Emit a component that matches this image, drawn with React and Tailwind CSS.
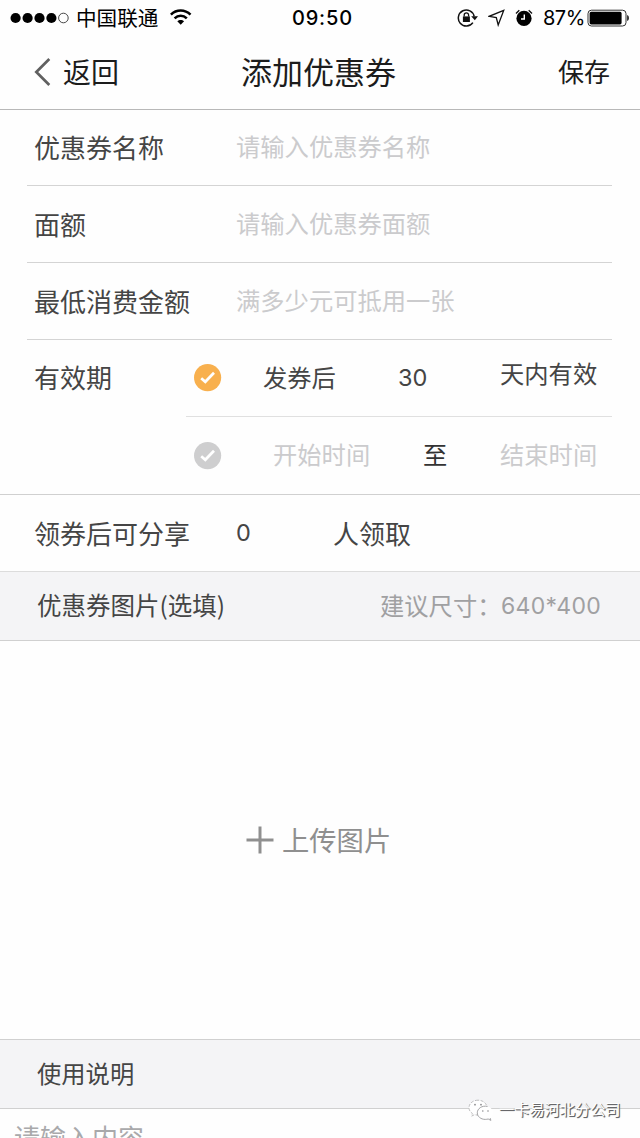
import React from "react";

const CJK = "font-['Noto_Sans_CJK_SC',sans-serif]";
const LATIN = "font-['Inter','Noto_Sans_CJK_SC',sans-serif]";

function StatusBar() {
  return (
    <div className="flex h-9 shrink-0 items-center text-black">
      <svg className="ml-[10px] h-[12px] w-[60px]" viewBox="0 0 60 12">
        <circle cx="5.6" cy="6" r="5.1" />
        <circle cx="17.6" cy="6" r="5.1" />
        <circle cx="29.5" cy="6" r="5.1" />
        <circle cx="41.4" cy="6" r="5.1" />
        <circle cx="53.4" cy="6" r="4.8" fill="none" stroke="#333" strokeWidth="0.9" />
      </svg>
      <span className="-mt-[2px] ml-[6px] w-[94px] text-[20.6px] leading-none">中国联通</span>
      <svg className="-mt-[2px] h-[18px] w-[22px]" viewBox="0 0 22 18" fill="none" stroke="#000" strokeWidth="2.6">
        <path d="M0.9 6.6C6.5 1.1 14.9 1.1 20.5 6.6" />
        <path d="M4.6 10.4C8.2 6.9 13.2 6.9 16.8 10.4" />
        <path d="M10.7 16.8L7.3 13.3C9.2 11.4 12.2 11.4 14.1 13.3Z" fill="#000" stroke="none" />
      </svg>
      <span className={`ml-[100px] w-[165px] text-[20px] font-medium leading-none tracking-[0.8px] ${LATIN}`}>09:50</span>
      <svg className="h-[20px] w-[22px]" viewBox="0 0 22 20" fill="none" stroke="#111" strokeWidth="1.5">
        <path d="M15.9 14.6A8 8 0 1 1 17.2 8.5" />
        <path d="M14.2 8.2H21L17.8 12.2Z" fill="#111" stroke="none" />
        <rect x="5.9" y="8.4" width="7" height="5.6" fill="#111" stroke="none" />
        <path d="M7.2 8.5V7a2.2 2.2 0 0 1 4.4 0v1.5" strokeWidth="1.3" />
      </svg>
      <svg className="ml-[9px] h-[18px] w-[18px]" viewBox="0 0 18 18" fill="none" stroke="#111" strokeWidth="1.3">
        <path d="M15.7 1.4L1.2 7.3L8.3 8.5L10.2 16Z" strokeLinejoin="miter" />
      </svg>
      <svg className="ml-[9px] h-[18px] w-[18px]" viewBox="0 0 18 18">
        <circle cx="9" cy="9.4" r="7.6" />
        <path d="M9.3 5.4V10H6" fill="none" stroke="#fff" strokeWidth="1.4" />
        <path d="M1 4.5L4.3 1.3M17 4.5L13.7 1.3" fill="none" stroke="#111" strokeWidth="1.4" />
      </svg>
      <span className={`ml-[10px] w-[44px] text-[20px] leading-none tracking-[-0.5px] ${LATIN}`}>87%</span>
      <svg className="h-[18px] w-[43px]" viewBox="0 0 43 18">
        <rect x="1" y="1.2" width="38" height="15.8" rx="3.4" fill="none" stroke="#333" strokeWidth="1" />
        <rect x="2.6" y="2.8" width="32" height="12.6" rx="1.6" />
        <path d="M40.2 6C42.4 6.6 42.4 11.4 40.2 12Z" fill="#111" />
      </svg>
    </div>
  );
}

function NavBar() {
  return (
    <div className="flex h-[74px] shrink-0 items-center border-b border-[#b8b8b8] text-[#1c1c1c]">
      <svg className="-mt-[2px] ml-[34px] h-[28px] w-[18px]" viewBox="0 0 18 28" fill="none" stroke="#606060" strokeWidth="2.7">
        <path d="M15.3 1L2.3 14L15.3 27" />
      </svg>
      <span className="mb-[4px] ml-[11px] w-[178px] text-[28px] leading-none">返回</span>
      <span className="mb-[5px] w-[317px] text-[31px] leading-none">添加优惠券</span>
      <span className="mb-[3px] text-[26px] leading-none">保存</span>
    </div>
  );
}

function Field({ label, placeholder, height }) {
  return (
    <div className={`ml-[27px] mr-[28px] flex shrink-0 items-center border-b border-[#d4d4d4] pl-[7px] ${height}`}>
      <span className="mb-px w-[202px] text-[26px] leading-none">{label}</span>
      <span className="mb-[2px] text-[24.3px] leading-none text-[#cbcbcd]">{placeholder}</span>
    </div>
  );
}

function Check({ color }) {
  return (
    <svg className={`h-[28px] w-[28px] ${color}`} viewBox="0 0 28 28">
      <circle cx="13.6" cy="13.6" r="13.6" fill="currentColor" />
      <path d="M7.2 14.2L11.3 17.8L20 8.8" fill="none" stroke="#fff" strokeWidth="2.7" />
    </svg>
  );
}

function Validity() {
  return (
    <div className="flex h-[155px] shrink-0 border-b border-[#d0d0d0]">
      <div className="flex h-[77px] w-[186px] items-center pl-[34px]">
        <span className="mb-[3px] text-[26px] leading-none">有效期</span>
      </div>
      <div className="w-[426px]">
        <div className="flex h-[77px] items-center border-b border-[#e0e0e0] pl-[8px]">
          <Check color="text-[#f8b04e]" />
          <span className="mb-[2px] ml-[41px] w-[135px] text-[24.3px] leading-none">发券后</span>
          <span className={`w-[102px] text-[23.5px] leading-none ${LATIN}`}>30</span>
          <span className="mb-[10px] text-[24.3px] leading-none">天内有效</span>
        </div>
        <div className="flex h-[77px] items-center pl-[8px]">
          <Check color="text-[#cececf]" />
          <span className="mb-[2px] ml-[51px] w-[150px] text-[24.3px] leading-none text-[#cbcbcd]">开始时间</span>
          <span className="mb-[2px] w-[77px] text-[24.3px] leading-none text-[#333]">至</span>
          <span className="mb-[2px] text-[24.3px] leading-none text-[#cbcbcd]">结束时间</span>
        </div>
      </div>
    </div>
  );
}

function Watermark() {
  return (
    <div className="absolute left-[467px] top-[1098px] flex items-center">
      <svg className="h-[24px] w-[28px]" viewBox="0 0 28 24" fill="#fff" stroke="#9a9a9c" strokeWidth="0.9">
        <path d="M11 2.2C5.8 2.2 2 5.6 2 9.7c0 2.4 1.3 4.4 3.4 5.8l-.8 2.6 3-1.5c1 .3 2.2.5 3.4.5 5 0 9-3.3 9-7.4s-4-7.5-9-7.5Z" strokeDasharray="3 1.5" stroke="#b5b5b7" />
        <path d="M18.3 8.2c-4.6 0-8 2.9-8 6.6s3.500 6.600 8 6.600c1 0 2-.2 2.900-.4l2.700 1.400-.7-2.300c1.800-1.200 3-3 3-5.300 0-3.700-3.500-6.600-7.900-6.600Z" stroke="none" />
        <path d="M20.500 8.400c-5.500-1.200-10.200 2.200-10.200 6.400 0 3.700 3.500 6.600 8 6.600 1 0 2-.2 2.900-.4l2.700 1.400-.7-2.300" fill="none" />
        <g fill="#8d8d90" stroke="none">
          <circle cx="8" cy="6.700" r="0.900" />
          <circle cx="14" cy="6.700" r="0.900" />
          <circle cx="15.800" cy="13" r="0.800" />
          <circle cx="21" cy="13" r="0.800" />
        </g>
      </svg>
      <span className="-mt-[2px] ml-[4px] whitespace-nowrap text-[15.2px] leading-none text-white [text-shadow:1px_1px_0_#67676a,1px_1px_1px_#77777a]">
        一卡易河北分公司
      </span>
    </div>
  );
}

export default function App() {
  return (
    <div className={`relative flex h-[1138px] w-[640px] flex-col overflow-hidden whitespace-nowrap bg-[#fefefe] text-[#454545] ${CJK}`}>
      <StatusBar />
      <NavBar />
      <Field label="优惠券名称" placeholder="请输入优惠券名称" height="h-[76px]" />
      <Field label="面额" placeholder="请输入优惠券面额" height="h-[77px]" />
      <Field label="最低消费金额" placeholder="满多少元可抵用一张" height="h-[77px]" />
      <Validity />
      <div className="flex h-[77px] shrink-0 items-center border-b border-[#dcdcdc] pl-[34px]">
        <span className="mb-px w-[202px] text-[26px] leading-none">领券后可分享</span>
        <span className={`w-[97px] text-[23.5px] leading-none ${LATIN}`}>0</span>
        <span className="mb-px text-[26px] leading-none">人领取</span>
      </div>
      <div className="flex h-[69px] shrink-0 items-center border-b border-[#d0d0d0] bg-[#f4f4f6] pl-[37px]">
        <span className="mb-px w-[343px] text-[24.5px] leading-none">优惠券图片(选填)</span>
        <span className="mb-px w-[121px] text-[24.3px] leading-none text-[#a0a0a2]">建议尺寸：</span>
        <span className={`text-[23px] leading-none tracking-[0.3px] text-[#a0a0a2] [font-feature-settings:'calt'_0] ${LATIN}`}>640*400</span>
      </div>
      <div className="flex h-[399px] shrink-0 items-center border-b border-[#d0d0d0] pl-[246px] text-[#8f8f8f]">
        <svg className="h-[28px] w-[28px]" viewBox="0 0 28 28" fill="none" stroke="currentColor" strokeWidth="3">
          <path d="M14 0.500V27.500M0.500 14H27.500" />
        </svg>
        <span className="ml-[8px] text-[27.3px] leading-none">上传图片</span>
      </div>
      <div className="flex h-[69px] shrink-0 items-center border-b border-[#d0d0d0] bg-[#f4f4f6] pl-[37px]">
        <span className="mb-px text-[24.3px] leading-none">使用说明</span>
      </div>
      <div className="h-[29px] shrink-0 overflow-hidden pl-[14px] pt-[15px]">
        <span className="block text-[26px] leading-none text-[#a9a9ab]">请输入内容</span>
      </div>
      <Watermark />
    </div>
  );
}
